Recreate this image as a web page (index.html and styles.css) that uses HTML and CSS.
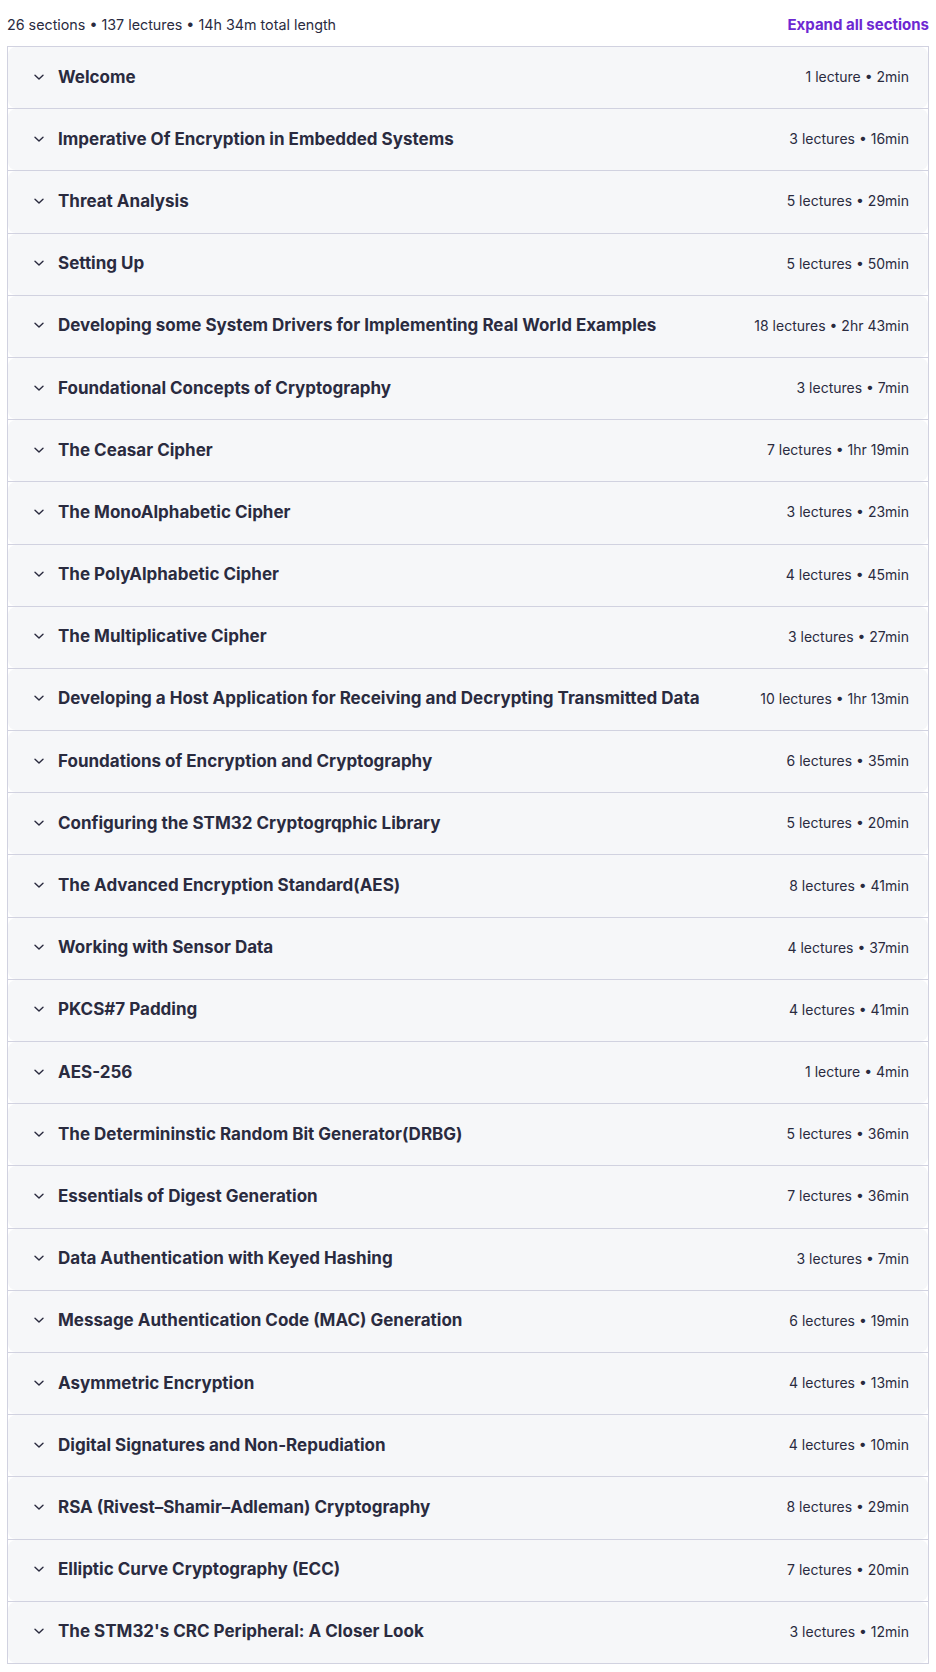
FILE: index.html
```html
<!DOCTYPE html>
<html lang="en">
<head>
    <meta charset="UTF-8">
    <meta name="viewport" content="width=device-width, initial-scale=1.0">
    <title>Course content</title>
    <link rel="stylesheet" href="styles.css">
</head>
<body>
    <div class="curriculum">
        <div class="summary">
            <span>26 sections • 137 lectures • 14h 34m total length</span>
            <button class="expand">Expand all sections</button>
        </div>
        <div class="sections" id="sections"></div>
    </div>

    <script>
        const sections = [
            ['Welcome', '1 lecture • 2min'],
            ['Imperative Of Encryption in Embedded Systems', '3 lectures • 16min'],
            ['Threat Analysis', '5 lectures • 29min'],
            ['Setting Up', '5 lectures • 50min'],
            ['Developing some System Drivers for Implementing Real World Examples', '18 lectures • 2hr 43min'],
            ['Foundational Concepts of Cryptography', '3 lectures • 7min'],
            ['The Ceasar Cipher', '7 lectures • 1hr 19min'],
            ['The MonoAlphabetic Cipher', '3 lectures • 23min'],
            ['The PolyAlphabetic Cipher', '4 lectures • 45min'],
            ['The Multiplicative Cipher', '3 lectures • 27min'],
            ['Developing a Host Application for Receiving and Decrypting Transmitted Data', '10 lectures • 1hr 13min'],
            ['Foundations of Encryption and Cryptography', '6 lectures • 35min'],
            ['Configuring the STM32 Cryptogrqphic Library', '5 lectures • 20min'],
            ['The Advanced Encryption Standard(AES)', '8 lectures • 41min'],
            ['Working with Sensor Data', '4 lectures • 37min'],
            ['PKCS#7 Padding', '4 lectures • 41min'],
            ['AES-256', '1 lecture • 4min'],
            ['The Determininstic Random Bit Generator(DRBG)', '5 lectures • 36min'],
            ['Essentials of Digest Generation', '7 lectures • 36min'],
            ['Data Authentication with Keyed Hashing', '3 lectures • 7min'],
            ['Message Authentication Code (MAC) Generation', '6 lectures • 19min'],
            ['Asymmetric Encryption', '4 lectures • 13min'],
            ['Digital Signatures and Non-Repudiation', '4 lectures • 10min'],
            ['RSA (Rivest\u2013Shamir\u2013Adleman) Cryptography', '8 lectures • 29min'],
            ['Elliptic Curve Cryptography (ECC)', '7 lectures • 20min'],
            ["The STM32's CRC Peripheral: A Closer Look", '3 lectures • 12min']
        ];

        const chevron = '<svg class="chevron" width="12" height="12" viewBox="0 0 12 12"><path d="M2 4.2 6 8 10 4.2" fill="none" stroke="currentColor" stroke-width="1.4" stroke-linecap="round" stroke-linejoin="round"/></svg>';

        const list = document.getElementById('sections');
        sections.forEach(([title, meta]) => {
            const row = document.createElement('div');
            row.className = 'section';
            row.innerHTML = `<div class="section-head">${chevron}<span class="title">${title}</span><span class="meta">${meta}</span></div>`;
            list.appendChild(row);
        });
    </script>
</body>
</html>
```

FILE: styles.css
```css
body {
    margin: 0;
    padding: 0 7px;
    font-family: Inter, "Noto Sans", sans-serif;
    color: #2a2b3f;
    background-color: #fff;
}
.summary {
    display: flex;
    justify-content: space-between;
    align-items: center;
    height: 46px;
    padding-top: 2px;
    box-sizing: border-box;
    font-size: 14.3px;
    color: #2a2b3f;
}
.expand {
    background: none;
    border: none;
    padding: 0;
    font-family: inherit;
    font-size: 15px;
    font-weight: 700;
    color: #6d28d2;
    cursor: pointer;
}
.sections {
    border: 1px solid #d1d2e0;
}
.section {
    border-bottom: 1px solid #d1d2e0;
}
.section:last-child {
    border-bottom: none;
}
.section-head {
    display: flex;
    align-items: center;
    height: 61.2px;
    padding: 0 19px 2px 25px;
    box-sizing: border-box;
    background-color: #f6f7f9;
    border-radius: 8px;
}
.chevron {
    flex: none;
    width: 12px;
    height: 12px;
    margin-right: 13px;
    color: #2a2b3f;
}
.title {
    flex: 1;
    font-size: 17px;
    font-weight: 700;
    color: #2a2b3f;
}
.meta {
    flex: none;
    margin-left: 16px;
    font-size: 14px;
    color: #2a2b3f;
}
```
